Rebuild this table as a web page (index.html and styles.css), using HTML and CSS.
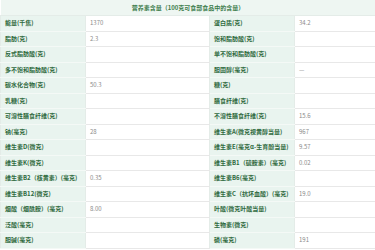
FILE: index.html
```html
<!DOCTYPE html>
<html lang="zh">
<head>
<meta charset="utf-8">
<link rel="stylesheet" href="styles.css">
</head>
<body>
<table class="nutri">
  <colgroup>
    <col class="c-l1"><col class="c-v1"><col class="c-l2"><col class="c-v2">
  </colgroup>
  <thead>
    <tr class="head"><th colspan="4">营养素含量（100克可食部食品中的含量）</th></tr>
  </thead>
  <tbody>
    <tr><td class="lb">能量(千焦)</td><td class="vl">1370</td><td class="lb">蛋白质(克)</td><td class="vl">34.2</td></tr>
    <tr><td class="lb">脂肪(克)</td><td class="vl">2.3</td><td class="lb">饱和脂肪酸(克)</td><td class="vl"></td></tr>
    <tr><td class="lb">反式脂肪酸(克)</td><td class="vl"></td><td class="lb">单不饱和脂肪酸(克)</td><td class="vl"></td></tr>
    <tr><td class="lb">多不饱和脂肪酸(克)</td><td class="vl"></td><td class="lb">胆固醇(毫克)</td><td class="vl">—</td></tr>
    <tr><td class="lb">碳水化合物(克)</td><td class="vl">50.3</td><td class="lb">糖(克)</td><td class="vl"></td></tr>
    <tr><td class="lb">乳糖(克)</td><td class="vl"></td><td class="lb">膳食纤维(克)</td><td class="vl"></td></tr>
    <tr><td class="lb">可溶性膳食纤维(克)</td><td class="vl"></td><td class="lb">不溶性膳食纤维(克)</td><td class="vl">15.6</td></tr>
    <tr><td class="lb">钠(毫克)</td><td class="vl">28</td><td class="lb">维生素A(微克视黄醇当量)</td><td class="vl">967</td></tr>
    <tr><td class="lb">维生素D(微克)</td><td class="vl"></td><td class="lb">维生素E(毫克α-生育酚当量)</td><td class="vl">9.57</td></tr>
    <tr><td class="lb">维生素K(微克)</td><td class="vl"></td><td class="lb">维生素B1（硫胺素）(毫克)</td><td class="vl">0.02</td></tr>
    <tr><td class="lb">维生素B2（核黄素）(毫克)</td><td class="vl">0.35</td><td class="lb">维生素B6(毫克)</td><td class="vl"></td></tr>
    <tr><td class="lb">维生素B12(微克)</td><td class="vl"></td><td class="lb">维生素C（抗坏血酸）(毫克)</td><td class="vl">19.0</td></tr>
    <tr><td class="lb">烟酸（烟酰胺）(毫克)</td><td class="vl">8.00</td><td class="lb">叶酸(微克叶酸当量)</td><td class="vl"></td></tr>
    <tr><td class="lb">泛酸(毫克)</td><td class="vl"></td><td class="lb">生物素(微克)</td><td class="vl"></td></tr>
    <tr><td class="lb">胆碱(毫克)</td><td class="vl"></td><td class="lb">磷(毫克)</td><td class="vl">191</td></tr>
  </tbody>
</table>
</body>
</html>
```

FILE: styles.css
```css
html, body {
  margin: 0;
  padding: 0;
  background: #ffffff;
}
body {
  font-family: "Noto Sans CJK SC", "Noto Sans", sans-serif;
  font-size: 6px;
}
.nutri {
  width: 375px;
  border-collapse: collapse;
  table-layout: fixed;
}
.c-l1 { width: 85px; }
.c-v1 { width: 124px; }
.c-l2 { width: 85px; }
.c-v2 { width: 81px; }
.head th {
  height: 15px;
  padding: 0;
  background: #eef6f2;
  color: #3d7d4d;
  font-weight: bold;
  text-align: center;
  font-size: 6px;
  border-bottom: 1px solid #e4ece8;
}
.nutri td {
  height: 14.5px;
  padding: 0 0 0 4px;
  border-bottom: 1px solid #e8e8e8;
  white-space: nowrap;
  overflow: hidden;
  line-height: 1;
}
.nutri td.lb {
  background: #e9f4ef;
  color: #2f6a3e;
  font-weight: bold;
  border-bottom-color: #f4f9f6;
  border-right: 1px solid #e4ece8;
  border-left: 1px solid #e4ece8;
}
.nutri td.vl {
  color: #8a8a8a;
  background: #ffffff;
}
```
